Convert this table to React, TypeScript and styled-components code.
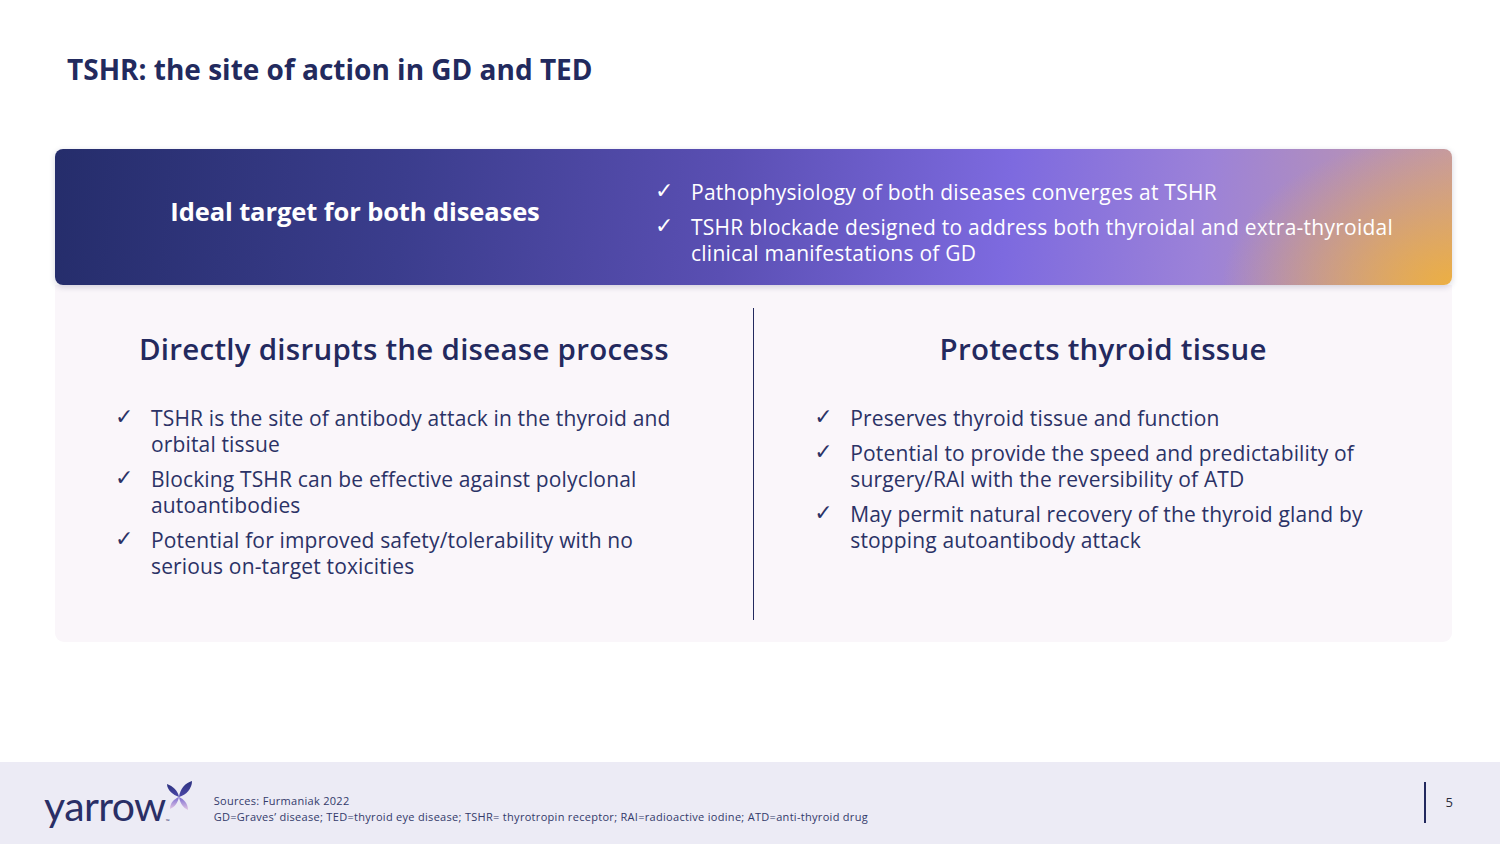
import React from "react";
import styled, { createGlobalStyle } from "styled-components";

const Global = createGlobalStyle`
  html, body { margin: 0; padding: 0; background: #ffffff; }
  body { font-family: "Open Sans", "Noto Sans", "Liberation Sans", sans-serif; }
  * { box-sizing: border-box; }
`;

const Page = styled.div`
  width: 1500px;
  height: 844px;
  display: flex;
  flex-direction: column;
  background: #ffffff;
  overflow: hidden;
`;

const Title = styled.h1`
  margin: 52px 0 0 67px;
  font-weight: 700;
  font-size: 28px;
  line-height: 35px;
  letter-spacing: 0;
  color: #222a5e;
`;

const Main = styled.main`
  margin: 62px 48px 0 55px;
  display: flex;
  flex-direction: column;
`;

const Banner = styled.section`
  height: 136px;
  border-radius: 8px;
  display: grid;
  grid-template-columns: 600px 1fr;
  box-shadow: 0 2px 6px rgba(30, 30, 80, 0.18);
  background:
    radial-gradient(ellipse 230px 150px at 100% 100%, rgba(238, 176, 62, 0.95), rgba(238, 176, 62, 0) 100%),
    linear-gradient(95deg, #252d6b 0%, #3b3d8d 25%, #5a4fb3 48%, #7d6adf 68%, #9c82d8 82%, #c59aa4 100%);
  color: #ffffff;
  position: relative;
  z-index: 1;
`;

const BannerHeading = styled.h2`
  margin: 0;
  align-self: center;
  justify-self: center;
  padding-bottom: 12px;
  font-weight: 700;
  font-size: 25.5px;
  letter-spacing: -0.1px;
`;

const BannerList = styled.ul`
  list-style: none;
  margin: 0;
  padding: 30px 0 0 2px;
  display: flex;
  flex-direction: column;
  gap: 9px;
`;

const Item = styled.li<{ $light?: boolean; $size: number; $ls: number }>`
  display: flex;
  font-size: ${(p) => p.$size}px;
  line-height: 26px;
  letter-spacing: ${(p) => p.$ls}px;
  color: ${(p) => (p.$light ? "#ffffff" : "#2b3266")};
  white-space: nowrap;
`;

const Check = styled.span<{ $light?: boolean }>`
  flex: 0 0 34px;
  font-family: "DejaVu Sans", sans-serif;
  font-size: 22px;
  line-height: 24px;
  letter-spacing: 0;
  margin-left: -2px;
  margin-right: 2px;
  color: ${(p) => (p.$light ? "#ffffff" : "#2b3266")};
`;

const Card = styled.section`
  height: 357px;
  background: #faf6fa;
  border-radius: 0 0 9px 9px;
  display: grid;
  grid-template-columns: 1fr 1.5px 1fr;
`;

const Column = styled.div`
  padding: 46px 0 0 62px;
  display: flex;
  flex-direction: column;
`;

const ColumnHeading = styled.h3`
  margin: 0 0 39px -62px;
  text-align: center;
  font-weight: 600;
  font-size: 29.5px;
  line-height: 35px;
  letter-spacing: 0.25px;
  color: #23295e;
`;

const List = styled.ul`
  list-style: none;
  margin: 0;
  padding: 0;
  display: flex;
  flex-direction: column;
  gap: 9px;
`;

const Divider = styled.div`
  margin: 23px 0 22px;
  background: #23295e;
`;

const Footer = styled.footer`
  margin-top: auto;
  height: 82px;
  background: #ecebf5;
  display: flex;
  align-items: center;
  padding: 0 47px 0 44px;
`;

const Logo = styled.div`
  display: flex;
  align-items: flex-start;
  height: 50px;
  padding-top: 2px;
`;

const LogoWord = styled.span`
  font-family: Lato, "Noto Sans", sans-serif;
  font-size: 41px;
  line-height: 40px;
  font-weight: 400;
  color: #2a2f66;
  letter-spacing: -0.6px;
  margin-top: 6px;
`;

const Tm = styled.span`
  font-size: 5px;
  color: #2a2f66;
  margin-top: 38px;
  width: 2px;
`;

const Sources = styled.div`
  margin-left: 21px;
  margin-top: 12px;
  font-size: 11px;
  line-height: 16px;
  letter-spacing: 0.3px;
  color: #333a6a;
`;

const PageNum = styled.div`
  margin-left: auto;
  margin-top: -2px;
  display: flex;
  align-items: center;
  gap: 20px;
  font-size: 13px;
  color: #2b2b3b;
`;

const PageRule = styled.div`
  width: 1.5px;
  height: 41px;
  background: #23295e;
`;

const Mark = () => (
  <svg width="28" height="31" viewBox="0 0 28 31" style={{ marginLeft: -3 }}>
    <defs>
      <linearGradient id="lo" x1="0" y1="0" x2="0" y2="1">
        <stop offset="0" stopColor="#7a6cd0" />
        <stop offset="1" stopColor="#e2c4e4" />
      </linearGradient>
      <linearGradient id="up" x1="0" y1="1" x2="0" y2="0">
        <stop offset="0" stopColor="#4b47a8" />
        <stop offset="1" stopColor="#2d3280" />
      </linearGradient>
    </defs>
    <path d="M14 17 C 8 15, 2 10, 2 4 C 8 6, 13 11, 14 17 Z" fill="url(#up)" />
    <path d="M14 17 C 15 9, 20 3, 27 1 C 27 9, 21 15, 14 17 Z" fill="url(#up)" />
    <path d="M14 17 C 9 19, 5 23, 5 29 C 10 27, 13 22, 14 17 Z" fill="url(#lo)" />
    <path d="M14 17 C 19 19, 23 24, 23 30 C 18 28, 15 23, 14 17 Z" fill="url(#lo)" />
  </svg>
);

type Bullet = string[];

const BulletItem = ({
  lines,
  light,
  size,
  ls,
}: {
  lines: Bullet;
  light?: boolean;
  size: number;
  ls: number;
}) => (
  <Item $light={light} $size={size} $ls={ls}>
    <Check $light={light}>✓</Check>
    <span>
      {lines.map((l, i) => (
        <React.Fragment key={i}>
          {i > 0 && <br />}
          {l}
        </React.Fragment>
      ))}
    </span>
  </Item>
);

const bannerBullets: Bullet[] = [
  ["Pathophysiology of both diseases converges at TSHR"],
  ["TSHR blockade designed to address both thyroidal and extra-thyroidal", "clinical manifestations of GD"],
];

const leftBullets: Bullet[] = [
  ["TSHR is the site of antibody attack in the thyroid and", "orbital tissue"],
  ["Blocking TSHR can be effective against polyclonal", "autoantibodies"],
  ["Potential for improved safety/tolerability with no", "serious on-target toxicities"],
];

const rightBullets: Bullet[] = [
  ["Preserves thyroid tissue and function"],
  ["Potential to provide the speed and predictability of", "surgery/RAI with the reversibility of ATD"],
  ["May permit natural recovery of the thyroid gland by", "stopping autoantibody attack"],
];

export default function App() {
  return (
    <Page>
      <Global />
      <Title>TSHR: the site of action in GD and TED</Title>
      <Main>
        <Banner>
          <BannerHeading>Ideal target for both diseases</BannerHeading>
          <BannerList>
            {bannerBullets.map((b, i) => (
              <BulletItem key={i} lines={b} light size={21} ls={0.25} />
            ))}
          </BannerList>
        </Banner>
        <Card>
          <Column>
            <ColumnHeading>Directly disrupts the disease process</ColumnHeading>
            <List>
              {leftBullets.map((b, i) => (
                <BulletItem key={i} lines={b} size={21} ls={0.15} />
              ))}
            </List>
          </Column>
          <Divider />
          <Column>
            <ColumnHeading>Protects thyroid tissue</ColumnHeading>
            <List>
              {rightBullets.map((b, i) => (
                <BulletItem key={i} lines={b} size={21} ls={0.15} />
              ))}
            </List>
          </Column>
        </Card>
      </Main>
      <Footer>
        <Logo>
          <LogoWord>yarrow</LogoWord>
          <Tm>™</Tm>
          <Mark />
        </Logo>
        <Sources>
          Sources: Furmaniak 2022
          <br />
          GD=Graves’ disease; TED=thyroid eye disease; TSHR= thyrotropin receptor; RAI=radioactive iodine; ATD=anti-thyroid drug
        </Sources>
        <PageNum>
          <PageRule />
          <span>5</span>
        </PageNum>
      </Footer>
    </Page>
  );
}
